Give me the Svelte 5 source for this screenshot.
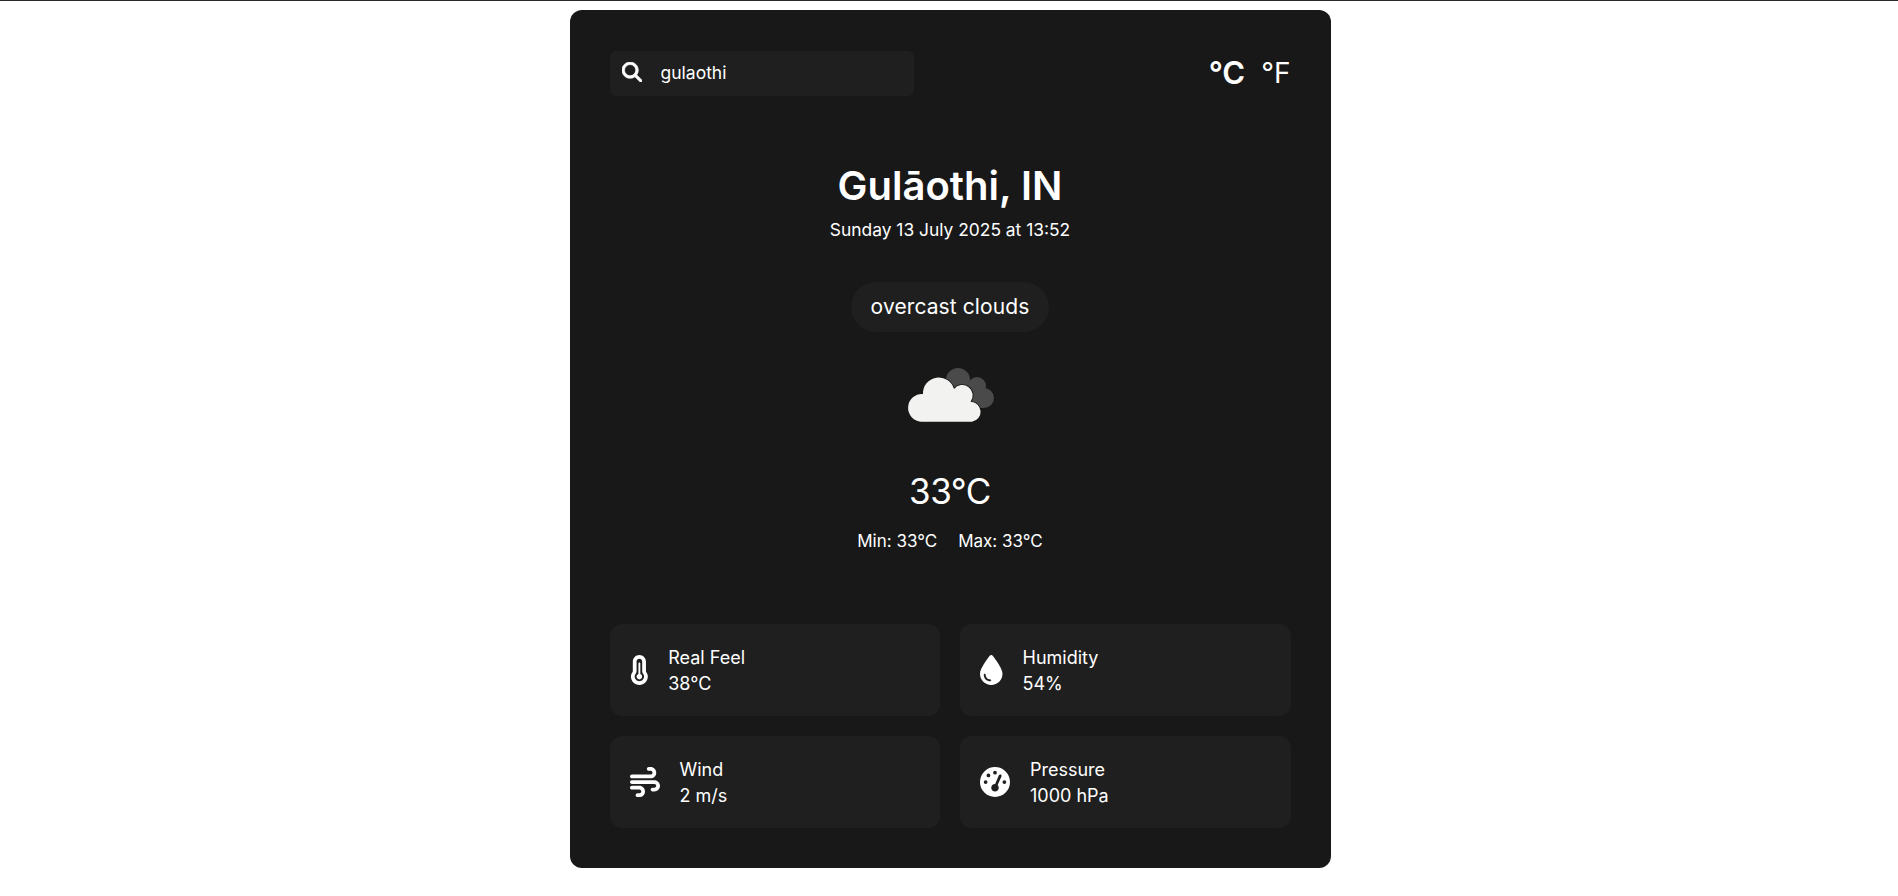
<script>
    let city = 'gulaothi';
    const tiles = [
        { label: 'Real Feel', value: '38°C', icon: 'temp' },
        { label: 'Humidity', value: '54%', icon: 'drop' },
        { label: 'Wind', value: '2 m/s', icon: 'wind' },
        { label: 'Pressure', value: '1000 hPa', icon: 'gauge' }
    ];
</script>

<div class="page">
    <main class="card">
        <header class="top">
            <label class="search">
                <svg class="search-icon" viewBox="0 0 512 512" aria-hidden="true">
                    <path d="M416 208c0 45.9-14.9 88.3-40 122.7L502.6 457.4c12.5 12.5 12.5 32.8 0 45.3s-32.8 12.5-45.3 0L330.7 376c-34.4 25.2-76.8 40-122.7 40C93.1 416 0 322.9 0 208S93.1 0 208 0S416 93.1 416 208zM208 352a144 144 0 1 0 0-288 144 144 0 1 0 0 288z" />
                </svg>
                <input bind:value={city} aria-label="City" />
            </label>
            <div class="units">
                <span class="unit active">°C</span>
                <span class="unit">°F</span>
            </div>
        </header>

        <section class="summary">
            <h1>Gulāothi, IN</h1>
            <p class="date">Sunday 13 July 2025 at 13:52</p>
            <div class="pill">overcast clouds</div>
            <svg class="cloud" viewBox="0 0 120 80" aria-hidden="true">
                <g fill="#4a4a4a">
                    <circle cx="68" cy="25" r="12" />
                    <circle cx="87" cy="31" r="9" />
                    <circle cx="94" cy="43" r="10" />
                    <rect x="60" y="30" width="34" height="23" />
                </g>
                <path
                    d="M31 66.7A13.7 13.7 0 0 1 33 39A15.8 15.8 0 0 1 64 34A9.3 9.3 0 0 1 80.5 46.8A10 10 0 0 1 82 66.7Z"
                    fill="#f2f2f1"
                    stroke="#1a1a1a"
                    stroke-width="1.6"
                    paint-order="stroke"
                />
            </svg>
            <p class="temp">33°C</p>
            <div class="range">
                <span>Min: 33°C</span>
                <span>Max: 33°C</span>
            </div>
        </section>

        <section class="tiles">
            {#each tiles as tile}
                <div class="tile">
                    {#if tile.icon === 'temp'}
                        <svg class="icon" viewBox="0 0 320 512" aria-hidden="true">
                            <path d="M160 64c-26.5 0-48 21.5-48 48V276.5c0 17.3-7.1 31.9-15.3 42.5C86.2 332.6 80 349.5 80 368c0 44.2 35.8 80 80 80s80-35.8 80-80c0-18.5-6.2-35.4-16.7-48.9c-8.2-10.6-15.3-25.2-15.3-42.5V112c0-26.5-21.5-48-48-48zM48 112C48 50.2 98.1 0 160 0s112 50.1 112 112V276.5c0 6.8 2.8 13.2 6.9 18.7C293.6 314.2 304 340 304 368c0 79.5-64.5 144-144 144s-144-64.5-144-144c0-27.9 10.4-53.7 25.1-72.8c4.1-5.5 6.9-11.9 6.9-18.7V112zM160 416c26.5 0 48-21.5 48-48c0-20.9-13.4-38.7-32-45.3V144c0-8.8-7.2-16-16-16s-16 7.2-16 16V322.7c-18.6 6.6-32 24.4-32 45.3c0 26.5 21.5 48 48 48z" />
                        </svg>
                    {:else if tile.icon === 'drop'}
                        <svg class="icon" viewBox="0 0 384 512" aria-hidden="true">
                            <path d="M192 512C86 512 0 426 0 320C0 228.8 130.2 57.7 166.6 11.7C172.6 4.2 181.5 0 191.1 0h1.8c9.6 0 18.5 4.2 24.5 11.7C253.8 57.7 384 228.8 384 320c0 106-86 192-192 192zM96 336c0-8.8-7.2-16-16-16s-16 7.2-16 16c0 61.9 50.1 112 112 112c8.8 0 16-7.2 16-16s-7.2-16-16-16c-44.2 0-80-35.8-80-80z" />
                        </svg>
                    {:else if tile.icon === 'wind'}
                        <svg class="icon" viewBox="0 0 512 512" aria-hidden="true">
                            <path d="M288 32c0 17.7 14.3 32 32 32h32c17.7 0 32 14.3 32 32s-14.3 32-32 32H32c-17.7 0-32 14.3-32 32s14.3 32 32 32H352c53 0 96-43 96-96s-43-96-96-96H320c-17.7 0-32 14.3-32 32zm64 352c0 17.7 14.3 32 32 32h32c53 0 96-43 96-96s-43-96-96-96H32c-17.7 0-32 14.3-32 32s14.3 32 32 32H416c17.7 0 32 14.3 32 32s-14.3 32-32 32H384c-17.7 0-32 14.3-32 32zM128 512h32c53 0 96-43 96-96s-43-96-96-96H32c-17.7 0-32 14.3-32 32s14.3 32 32 32H160c17.7 0 32 14.3 32 32s-14.3 32-32 32H128c-17.7 0-32 14.3-32 32s14.3 32 32 32z" />
                        </svg>
                    {:else}
                        <svg class="icon" viewBox="0 0 512 512" aria-hidden="true">
                            <path d="M0 256a256 256 0 1 1 512 0A256 256 0 1 1 0 256zM288 96a32 32 0 1 0 -64 0 32 32 0 1 0 64 0zM256 416c35.3 0 64-28.7 64-64c0-17.4-6.9-33.1-18.1-44.6L366 161.7c5.3-12.1-.2-26.3-12.3-31.6s-26.3 .2-31.6 12.3L257.9 288c-.6 0-1.3 0-1.9 0c-35.3 0-64 28.7-64 64s28.7 64 64 64zM176 144a32 32 0 1 0 -64 0 32 32 0 1 0 64 0zM96 288a32 32 0 1 0 0-64 32 32 0 1 0 0 64zm352-32a32 32 0 1 0 -64 0 32 32 0 1 0 64 0z" />
                        </svg>
                    {/if}
                    <div class="tile-text">
                        <span>{tile.label}</span>
                        <span>{tile.value}</span>
                    </div>
                </div>
            {/each}
        </section>
    </main>
</div>

<style>
    :global(body) {
        background: #fff;
        font-family: Inter, 'Liberation Sans', sans-serif;
    }

    .page {
        border-top: 1px solid #2b2b2b;
        padding-top: 9px;
        padding-left: 2px;
    }

    .card {
        box-sizing: border-box;
        width: 761px;
        height: 858px;
        margin: 0 auto;
        padding: 41px 40px 40px;
        border-radius: 12px;
        background: #181818;
        color: #fff;
    }

    .top {
        display: flex;
        align-items: center;
        justify-content: space-between;
    }

    .search {
        display: flex;
        align-items: center;
        gap: 19px;
        box-sizing: border-box;
        width: 304px;
        height: 45px;
        padding-left: 12px;
        border-radius: 6px;
        background: #1f1f1f;
    }

    .search-icon {
        width: 20px;
        height: 20px;
        margin-bottom: 3px;
        fill: #fff;
        stroke: #fff;
        stroke-width: 18;
    }

    input {
        flex: 1;
        min-width: 0;
        padding: 0 0 2px;
        border: 0;
        outline: 0;
        background: transparent;
        color: #fff;
        font: 17.5px Inter, sans-serif;
    }

    .units {
        display: flex;
        align-items: center;
        gap: 16px;
        margin-bottom: 2px;
    }

    .unit {
        font-size: 28px;
        line-height: 1;
    }

    .active {
        font-size: 31px;
        font-weight: 600;
    }

    .summary {
        display: flex;
        flex-direction: column;
        align-items: center;
        margin-top: 60px;
    }

    h1 {
        margin: 0;
        font-size: 40px;
        font-weight: 600;
        line-height: 60px;
    }

    .date {
        margin: 0;
        font-size: 17.4px;
        line-height: 27px;
    }

    .pill {
        box-sizing: border-box;
        height: 50px;
        margin-top: 39px;
        padding: 0 20px;
        border-radius: 25px;
        background: #1f1f1f;
        font-size: 21px;
        letter-spacing: 0.1px;
        line-height: 50px;
    }

    .cloud {
        display: block;
        width: 120px;
        height: 80px;
        margin-top: 23px;
    }

    .temp {
        margin: 29px 0 0;
        font-size: 35px;
        font-weight: 400;
        letter-spacing: -0.5px;
        line-height: 54px;
    }

    .range {
        display: flex;
        gap: 21px;
        margin-top: 10px;
        font-size: 17px;
        line-height: 27px;
    }

    .tiles {
        display: grid;
        grid-template-columns: 1fr 1fr;
        gap: 20px;
        margin-top: 69px;
    }

    .tile {
        display: flex;
        align-items: center;
        gap: 20px;
        box-sizing: border-box;
        height: 92px;
        padding-left: 20px;
        border-radius: 12px;
        background: #1f1f1f;
    }

    .icon {
        flex: none;
        height: 30px;
        fill: #fff;
    }

    .tile-text {
        display: flex;
        flex-direction: column;
        padding-top: 1px;
        font-size: 18px;
        line-height: 26px;
    }
</style>
